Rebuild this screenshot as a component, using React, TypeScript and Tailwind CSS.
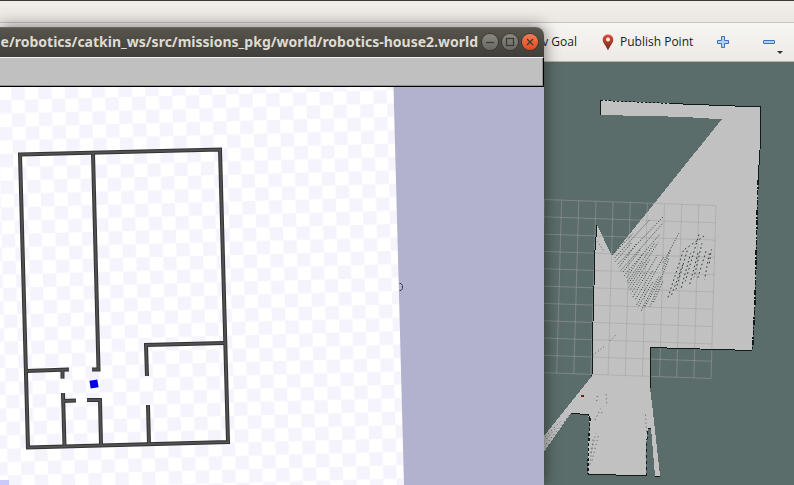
import React from "react";

const CELL = 13.4;

const wallPaths = [
  "M20 154.500 L220 149.500 L228 442 L28 447.500 Z",
  "M93 153 L98.500 369.500 L92 369.500",
  "M26 371 L69 369.500",
  "M62.500 370 V378.500",
  "M63 393 L64.500 446",
  "M63 401 L76 400.500",
  "M87 400 L100 400 L101 445",
  "M147 376 L146 345 L224 343",
  "M148 405 L149 444",
];

const leftFan: number[][] = [
  [38, 164, 100, 100], [42, 176, 150, 58], [45, 186, 95, 128], [52, 194, 190, 50],
  [56, 204, 110, 130], [62, 212, 190, 68], [66, 220, 122, 148], [72, 228, 180, 102],
  [78, 236, 130, 160], [82, 244, 164, 130], [84, 252, 132, 184], [86, 262, 174, 128],
  [90, 270, 150, 178], [94, 280, 136, 214], [98, 292, 172, 166], [104, 302, 158, 212],
  [110, 314, 190, 172], [114, 322, 160, 244], [124, 332, 176, 230], [134, 322, 182, 232],
  [150, 320, 206, 178], [160, 308, 190, 240], [186, 212, 212, 150],
  [190, 188, 236, 100],
];

const rightFan: number[][] = [
  [204, 292, 250, 152], [212, 292, 250, 190], [228, 268, 262, 150], [242, 270, 272, 160],
  [256, 244, 298, 100], [268, 258, 296, 152], [282, 232, 306, 130], [292, 238, 320, 148],
  [314, 238, 328, 160], [328, 190, 334, 148], [248, 152, 318, 104],
];

const scatter: number[][] = [
  [172, 168, 170, 184], [198, 156, 200, 190], [182, 206, 162, 246], [192, 214, 178, 222],
  [168, 280, 152, 340], [176, 284, 154, 370], [160, 290, 150, 374], [316, 220, 320, 280],
  [322, 290, 318, 350],
  [88, 226, 14, 318], [66, 240, 16, 290], [72, 256, 20, 322], [50, 262, 14, 302],
];

const MAP_SHAPE =
  "M600 100 L630 102 L690 104 L722 106 L761 107 L760 150 L758 180 L755 300 L752 350 L700 349 L650 347 L650 388 L653 412 L660 476 L655 476 L651 428 L648 428 L646 446 L646 476 L616 475 L588 474 L588 446 L590 424 L588 414 L571 413 L544 452 V436 L592 376 L592 340 L595 250 L597 225 L612 256 L722 119 L695 118 L690 117 L600 115 Z";

const mapWalls = [
  "M600.500 100 V115",
  "M601 100.500 L670 103.500",
  "M670 103.500 L722 105.500 L761 107",
  "M650 388 V347.500 L700 349 L752 350.500",
  "M571 413.500 L588 414.500 L590 418",
  "M588 474.500 L616 475 L646 476",
  "M592 376 L592.500 340 L595 250 L597 225",
  "M648 428.500 H651",
  "M655 476.500 H660",
];

function Segments({ lines, dash }: { lines: number[][]; dash: string }) {
  return (
    <>
      {lines.map(([x1, y1, x2, y2], i) => (
        <line key={i} x1={x1} y1={y1} x2={x2} y2={y2} strokeDasharray={dash} strokeDashoffset={(i * 5) % 9} />
      ))}
    </>
  );
}

function OccupancyMap() {
  const steps = Array.from({ length: 11 }, (_, i) => i);
  return (
    <svg className="block h-full w-full" role="img" aria-label="Occupancy grid map">
      <g transform="translate(0 -62)">
        <path d={MAP_SHAPE} fill="#c1c1c1" shapeRendering="crispEdges" />
        <g stroke="#a0a0a4" strokeOpacity="0.5" strokeWidth="1">
          {steps.map((i) => (
            <React.Fragment key={i}>
              <line x1={544 - i * 0.5} y1={199.5 + i * 17.3} x2={716 - i * 0.5} y2={205.5 + i * 17.3} />
              <line x1={544.5 + i * 17.15} y1={199.5 + i * 0.6} x2={539.5 + i * 17.15} y2={372.5 + i * 0.6} />
            </React.Fragment>
          ))}
        </g>
        <g fill="none" stroke="#111a19" strokeWidth="1" shapeRendering="crispEdges">
          {mapWalls.map((d) => (
            <path key={d} d={d} strokeDasharray={d.startsWith("M601") ? "2 2" : undefined} />
          ))}
          <path d="M761 107 L760 150 L758 180" />
          <path d="M758 180 L755 300 L752.500 350" strokeWidth="1.500" strokeDasharray="5 2 2 1" />
          <path d="M590 418 L588.500 446 L588 474" strokeWidth="1.500" strokeDasharray="3 2" />
          <path d="M646 476 L646 450 L648 428" strokeDasharray="3 3" />
        </g>
        <g transform="translate(600 200) scale(0.3333)" stroke="#2c3b3a" strokeWidth="3">
          <Segments lines={leftFan} dash="3 5" />
          <Segments lines={rightFan} dash="5 8" />
        </g>
        <g transform="translate(540 340) scale(0.3333)" stroke="#3b4a49" strokeWidth="2.500">
          <Segments lines={scatter} dash="3 9" />
          <g transform="translate(0 -480)">
            <Segments lines={[[158, 526, 192, 500], [206, 486, 226, 466], [172, 184, 192, 214]]} dash="3 7" />
          </g>
        </g>
        <rect x="581" y="395" width="3" height="2" fill="#8b1a12" />
        <rect x="583" y="395" width="1" height="2" fill="#1d3a20" />
      </g>
    </svg>
  );
}

function FloorPlan() {
  return (
    <svg className="block h-full w-full" role="img" aria-label="Simulated house floor plan">
      <defs>
        <pattern
          id="checker"
          width={CELL * 2}
          height={CELL * 2}
          patternUnits="userSpaceOnUse"
          patternTransform="translate(11.5 100) rotate(-1.5)"
        >
          <rect width={CELL * 2} height={CELL * 2} fill="#ffffff" />
          <rect x={CELL} width={CELL} height={CELL} fill="#f5f4fd" />
          <rect y={CELL} width={CELL} height={CELL} fill="#f5f4fd" />
        </pattern>
      </defs>
      <g transform="translate(0 -87)">
        <path d="M0 87 H393.500 L404 485 L430 1472 H0 Z" fill="url(#checker)" />
        <rect y="480" width="9" height="6" fill="#c9c9fb" />
        <g fill="none" stroke="#333333" strokeWidth="4">
          {wallPaths.map((d) => <path key={d} d={d} />)}
        </g>
        <g fill="none" stroke="#515151" strokeWidth="2">
          {wallPaths.map((d) => <path key={d} d={d} />)}
        </g>
        <rect x="-4" y="-4" width="8" height="8" transform="translate(94 384) rotate(-9)" fill="#0202e6" />
        <path d="M399.500 283.500 H401 L402.500 285.500 V288.500 L401 290.500 H399.500" fill="none" stroke="#3c3c50" />
      </g>
    </svg>
  );
}

function WindowButton({ label, close, children }: { label: string; close?: boolean; children: React.ReactNode }) {
  return (
    <button
      aria-label={label}
      className={
        close
          ? "size-4 shrink-0 rounded-full bg-linear-to-b from-[#f37b50] to-[#df4b1d] shadow-[0_0_0_1px_#3a3934]"
          : "size-4 shrink-0 rounded-full bg-linear-to-b from-[#898780] to-[#6a6862] shadow-[0_0_0_1px_#3a3934]"
      }
    >
      <svg viewBox="0 0 16 16" className="size-4" fill="none" stroke="#393832" strokeWidth="1.200">
        {children}
      </svg>
    </button>
  );
}

function SimulatorWindow() {
  return (
    <section className="absolute top-[27px] bottom-0 left-0 flex w-[544px] flex-col rounded-tr-lg shadow-[0_0_16px_rgba(0,0,0,0.55)]">
      <header className="flex h-[30px] shrink-0 items-center justify-end gap-1 rounded-tr-lg border-t border-[#6b6961] bg-linear-to-b from-[#57554c] to-[#3f3e39] pr-1.5 pb-px">
        <h1 className="flex-1 text-right font-['Noto_Sans','Open_Sans',sans-serif] text-[14px] leading-5 font-bold whitespace-nowrap text-[#dfdbd2]">
          e/robotics/catkin_ws/src/missions_pkg/world/robotics-house2.world
        </h1>
        <WindowButton label="Minimize">
          <path d="M4 8.500 H12" />
        </WindowButton>
        <WindowButton label="Maximize">
          <rect x="4.500" y="4.500" width="7" height="7" />
        </WindowButton>
        <WindowButton label="Close" close>
          <path d="M5 5 L11 11 M11 5 L5 11" />
        </WindowButton>
      </header>
      <div className="h-[30px] shrink-0 border-t border-r border-b border-t-[#f4f4f4] border-r-black border-b-black bg-[#c0c0c0] shadow-[inset_-1px_-1px_0_#909090]" />
      <div className="min-h-0 flex-1 bg-[#b2b1ce]">
        <FloorPlan />
      </div>
    </section>
  );
}

function Toolbar() {
  return (
    <nav className="flex h-[39px] shrink-0 items-center border-b border-[#b4b1ab] bg-linear-to-b from-[#f7f5f2] to-[#edeae6] pl-[505px] font-['Open_Sans','Noto_Sans',sans-serif] text-[12px] leading-4 whitespace-nowrap text-[#1c1c1c]">
      <button className="w-[72px] text-right">2D Nav Goal</button>
      <button className="ml-[25px] flex items-center gap-1.5">
        <svg viewBox="0 0 12 17" className="h-[17px] w-3">
          <defs>
            <linearGradient id="pin" x2="0" y2="1">
              <stop stopColor="#df5138" />
              <stop offset="1" stopColor="#65251c" />
            </linearGradient>
          </defs>
          <path d="M6 .5 C2.800 .5 .7 2.800 .7 5.700 C.7 9 4 11.500 6 16.500 C8 11.500 11.300 9 11.300 5.700 C11.300 2.800 9.200 .5 6 .5 Z" fill="url(#pin)" />
          <circle cx="6" cy="5.500" r="2" fill="#fbf0ec" />
        </svg>
        <span>Publish Point</span>
      </button>
      <button aria-label="Add tool" className="ml-6">
        <svg viewBox="0 0 12 12" className="size-3" fill="#b4d2f5" stroke="#3d70b8">
          <path d="M4.500 .5 H7.500 V4.500 H11.500 V7.500 H7.500 V11.500 H4.500 V7.500 H.5 V4.500 H4.500 Z" />
        </svg>
      </button>
      <button aria-label="Remove tool" className="relative ml-[34px]">
        <svg viewBox="0 0 12 12" className="size-3" fill="#b4d2f5" stroke="#3d70b8">
          <rect x=".5" y="4.500" width="11" height="3" rx=".5" />
        </svg>
        <svg viewBox="0 0 6 3" className="absolute top-[15px] left-3.5 h-[3px] w-1.5" fill="#333">
          <path d="M0 0 H6 L3 3 Z" />
        </svg>
      </button>
    </nav>
  );
}

export default function App() {
  return (
    <main className="relative flex h-screen flex-col overflow-hidden bg-[#5b6d6a]">
      <div className="h-[23px] shrink-0 border-t border-b border-t-[#3c3936] border-b-[#c9c6c1] bg-linear-to-b from-[#f1eeea] to-[#ebe8e4]" />
      <Toolbar />
      <div className="min-h-0 flex-1">
        <OccupancyMap />
      </div>
      <SimulatorWindow />
    </main>
  );
}
